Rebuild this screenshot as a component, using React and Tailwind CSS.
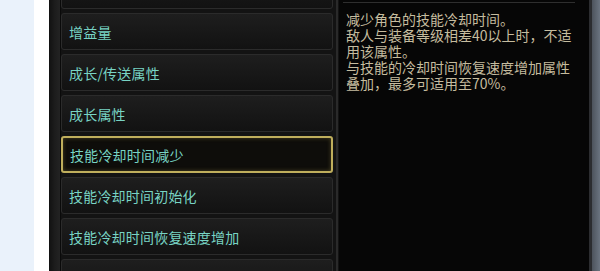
import React from 'react';

const options = [
  { label: '', partial: true },
  { label: '增益量' },
  { label: '成长/传送属性' },
  { label: '成长属性' },
  { label: '技能冷却时间减少', active: true },
  { label: '技能冷却时间初始化' },
  { label: '技能冷却时间恢复速度增加' },
  { label: '技能冷却时间' },
];

const lines = [
  '减少角色的技能冷却时间。',
  '敌人与装备等级相差40以上时，不适',
  '用该属性。',
  '与技能的冷却时间恢复速度增加属性',
  '叠加，最多可适用至70%。',
];

const OptionButton = ({ label, active }) => (
  <div
    className={
      active
        ? 'h-[37px] shrink-0 flex items-center pl-[7px] rounded-[3px] border-2 border-[#bfae5c] bg-[#0e0d0a] shadow-[inset_0_0_4px_rgba(190,170,80,0.35)]'
        : 'h-[37px] shrink-0 flex items-center pl-[7px] rounded-[3px] border border-[#2b2b2b] bg-gradient-to-b from-[#1e1e1e] to-[#121212]'
    }
  >
    <span className="text-[14px] leading-none text-[#78d4c4] tracking-[0.2px]">{label}</span>
  </div>
);

export default function App() {
  return (
    <div
      className="flex h-[271px] w-[600px] overflow-hidden"
      style={{ fontFamily: '"Noto Sans CJK SC", "Noto Sans", sans-serif' }}
    >
      <div className="w-[34px] bg-[#eaf2fb]" />
      <div className="w-[15px] bg-white" />
      <div className="flex flex-1 bg-[#131313]">
        <div className="w-[12px] bg-gradient-to-r from-[#111] via-[#1c1c1c] to-[#232323] border-r border-[#0a0a0a]" />
        <div className="w-[272px] flex flex-col gap-[4px] -mt-[28px]">
          {options.map((o, i) => (
            <OptionButton key={i} label={o.label} active={o.active} />
          ))}
        </div>
        <div className="w-[6px] flex justify-center pl-[2px]">
          <div className="w-[2px] bg-[#2a2a2a]" />
        </div>
        <div className="w-[250px] bg-[#060606] pt-[2px] flex flex-col">
          <div className="h-px ml-[4px] mr-[14px] bg-[#2e2e2e]" />
          <div className="pl-[7px] pt-[8px] text-[14px] leading-[16px] text-[#c5bc9f]">
            {lines.map((l, i) => (
              <div key={i} className="whitespace-nowrap">{l}</div>
            ))}
          </div>
        </div>
        <div className="w-[3px] bg-[#2c2d30]" />
        <div className="flex-1 bg-gradient-to-r from-[#4d535c] to-[#6b7480]" />
      </div>
    </div>
  );
}
